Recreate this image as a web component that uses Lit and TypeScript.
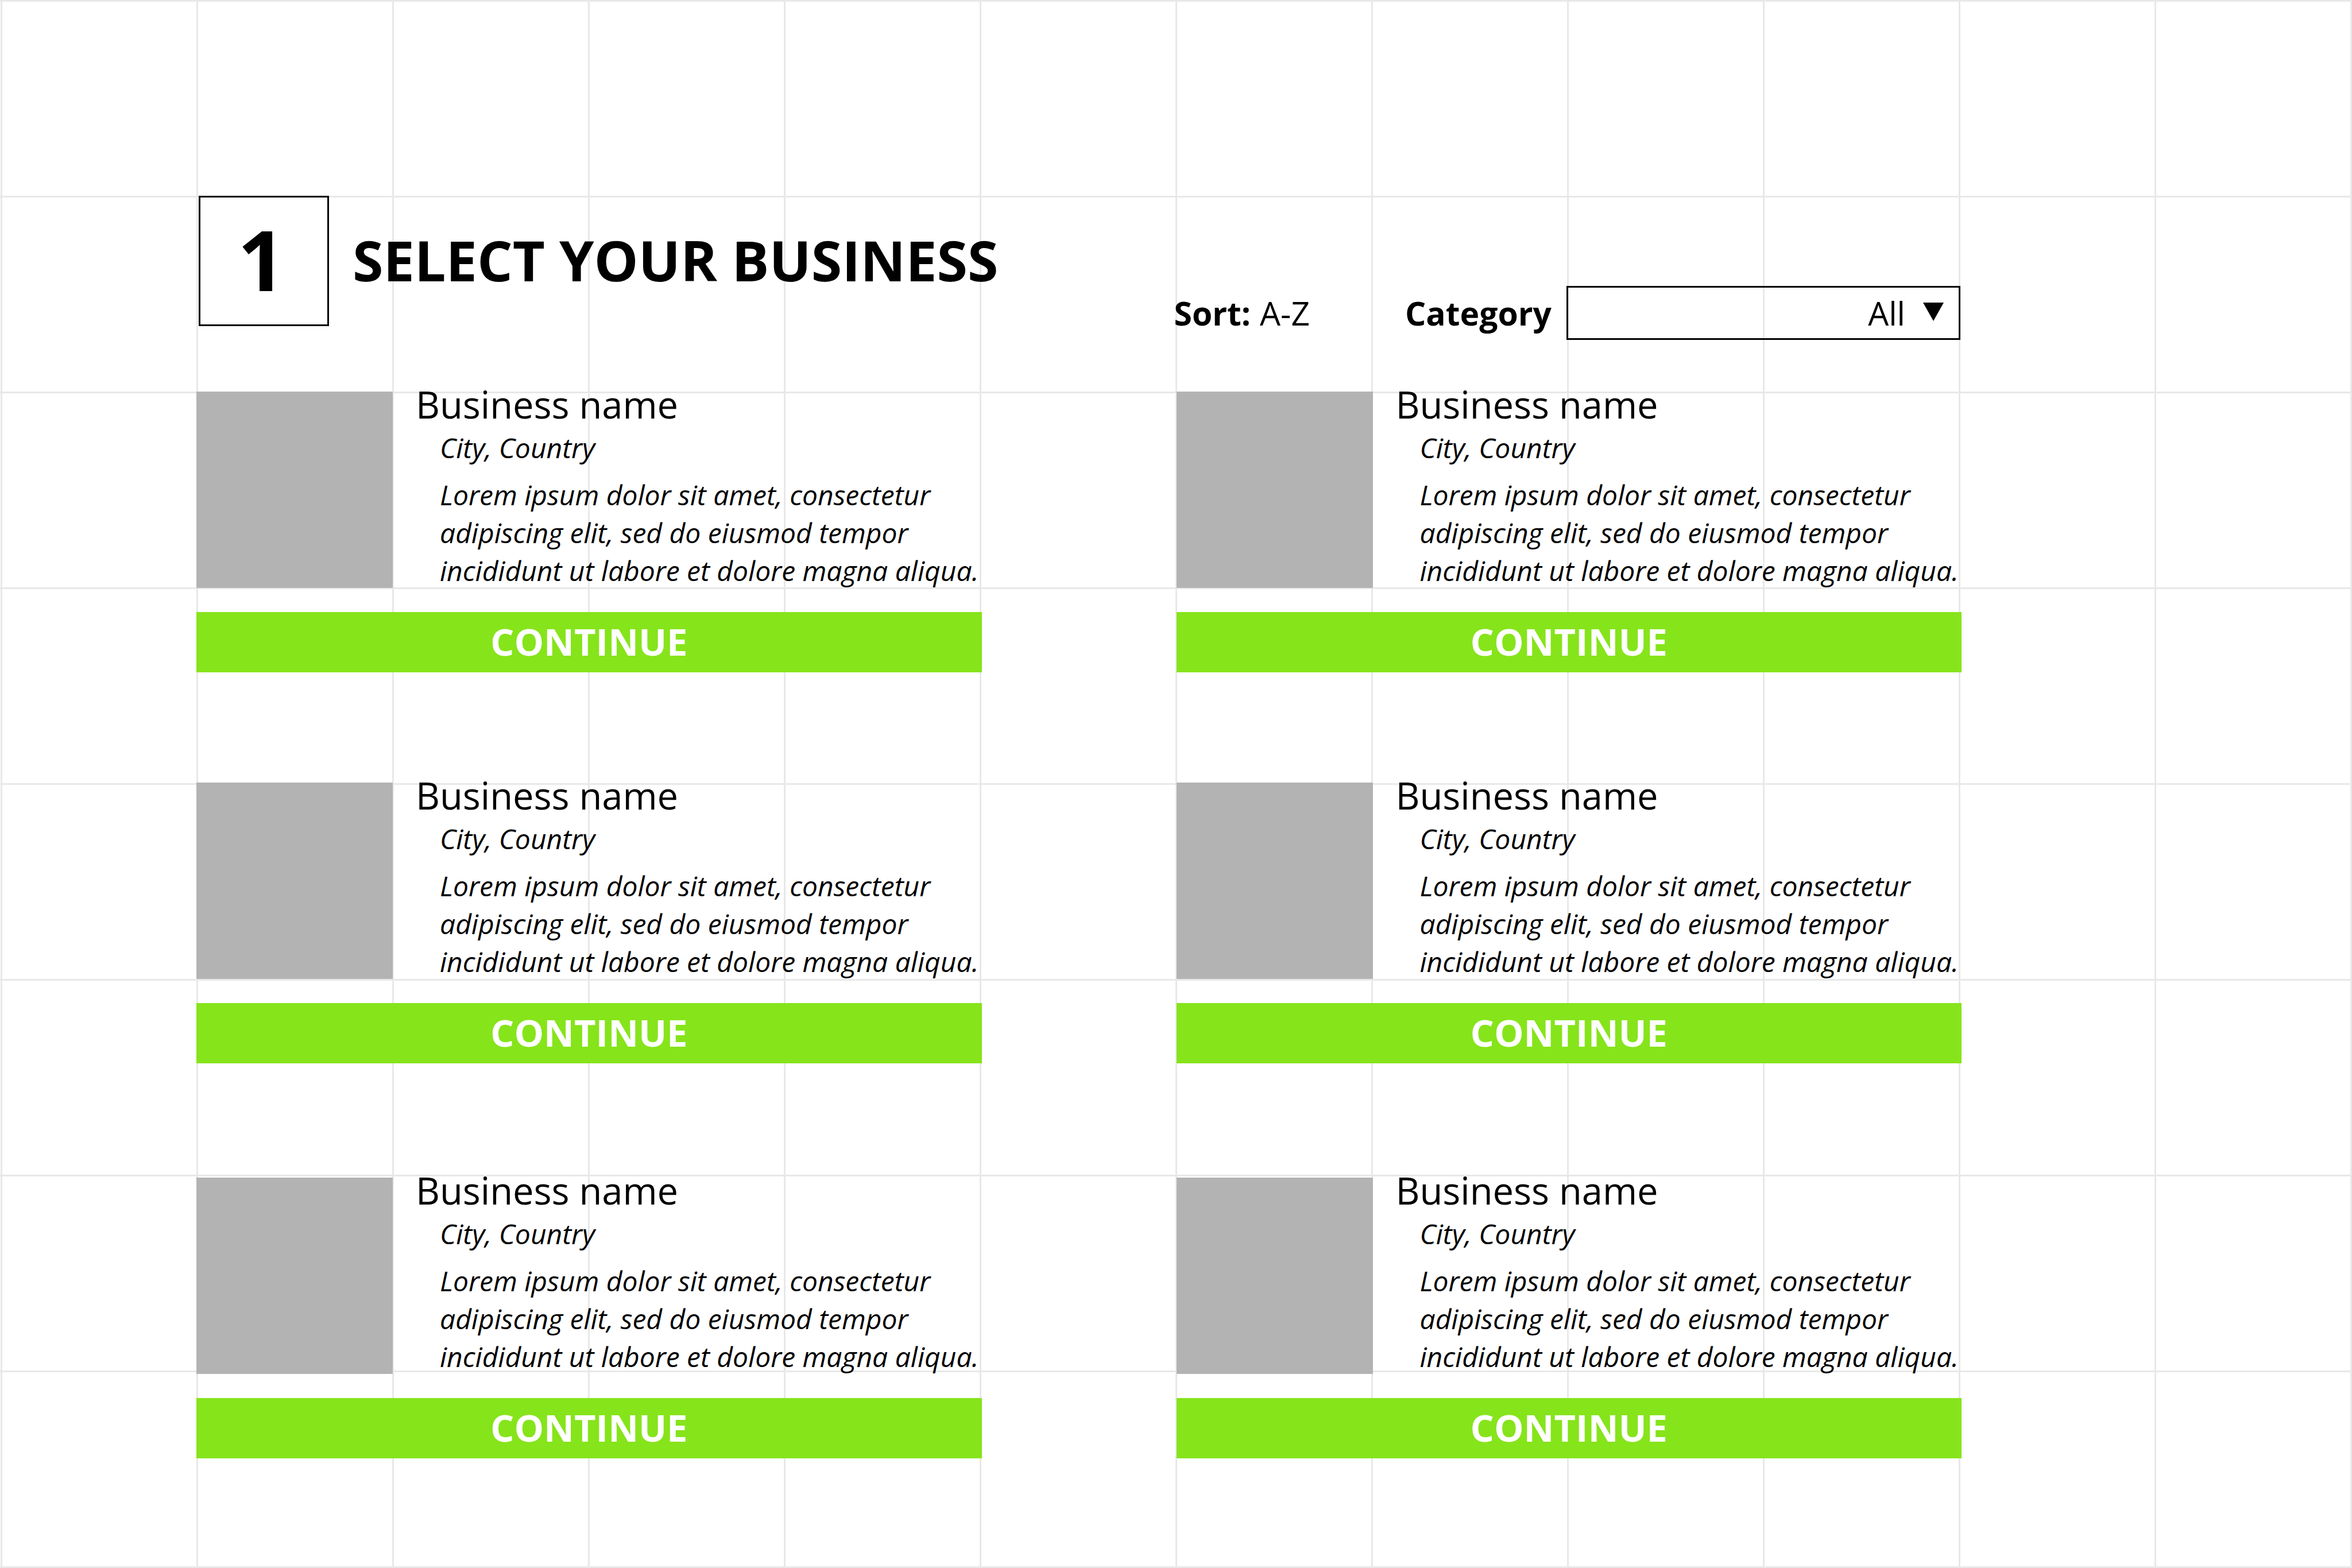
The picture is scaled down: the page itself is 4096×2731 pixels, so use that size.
import { LitElement, html, css } from "lit";
import { customElement, property } from "lit/decorators.js";

@customElement("business-card")
class BusinessCard extends LitElement {
  @property() name = "";
  @property() place = "";
  @property() text = "";

  static styles = css`
    :host {
      display: block;
    }
    .card {
      display: flex;
      flex-direction: column;
      gap: 42px;
    }
    .summary {
      display: flex;
      gap: 40px;
    }
    .thumb {
      flex: none;
      width: calc(var(--unit) + 1px);
      height: calc(var(--unit) + 1px);
      background: #b3b3b3;
    }
    .body {
      flex: 1;
      min-width: 0;
      margin: -21px 0 -4px;
    }
    .name {
      margin: 0;
      font-size: 65px;
      line-height: 86px;
      font-weight: 400;
    }
    .place,
    .text {
      margin: 0;
      padding-left: 42px;
      font-size: 48px;
      line-height: 66px;
      font-style: italic;
      white-space: pre-line;
    }
    .text {
      margin-top: 16px;
      margin-right: -8px;
    }
    .continue {
      box-sizing: border-box;
      width: 100%;
      height: 105px;
      padding: 0 0 3px;
      border: 0;
      background: #86e41b;
      color: #fff;
      font: 700 65px/102px "Open Sans", sans-serif;
      text-align: center;
    }
  `;

  render() {
    return html`
      <article class="card">
        <div class="summary">
          <div class="thumb"></div>
          <div class="body">
            <h2 class="name">${this.name}</h2>
            <p class="place">${this.place}</p>
            <p class="text">${this.text}</p>
          </div>
        </div>
        <button class="continue" type="button">CONTINUE</button>
      </article>
    `;
  }
}

const TEXT =
  "Lorem ipsum dolor sit amet, consectetur\nadipiscing elit, sed do eiusmod tempor\nincididunt ut labore et dolore magna aliqua.";

const BUSINESSES = Array.from({ length: 6 }, () => ({
  name: "Business name",
  place: "City, Country",
  text: TEXT,
}));

@customElement("app-root")
class AppRoot extends LitElement {
  static styles = css`
    :host {
      --unit: calc((100vw - 4px) / 12);
      display: block;
      box-sizing: border-box;
      min-height: 100vh;
      padding: var(--unit) calc(var(--unit) * 2 - 2px) 0
        calc(var(--unit) + 1px);
      color: #000;
      font-family: "Open Sans", sans-serif;
      background-color: #fff;
      background-image: linear-gradient(to right, #e8e8e8 3px, transparent 3px),
        linear-gradient(to bottom, #e8e8e8 3px, transparent 3px);
      background-size: var(--unit) var(--unit);
      background-position: 1px 0;
    }
    .top {
      display: grid;
      grid-template-columns: repeat(2, minmax(0, 1fr));
      column-gap: calc(var(--unit) - 2px);
      height: var(--unit);
    }
    .heading {
      display: flex;
      align-items: center;
      align-self: start;
      gap: 41px;
      padding-left: 4px;
    }
    .step {
      flex: none;
      box-sizing: border-box;
      width: 227px;
      height: 227px;
      padding-right: 8px;
      border: 3px solid #000;
      background: #fff;
      font-size: 146px;
      line-height: 214px;
      font-weight: 700;
      text-align: center;
    }
    .title {
      margin: 0;
      padding-bottom: 6px;
      font-size: 97px;
      line-height: 132px;
      font-weight: 700;
      white-space: nowrap;
    }
    .filters {
      display: flex;
      align-items: center;
      align-self: start;
      justify-content: space-between;
      margin-left: -4px;
      padding: 157px 2px 0 0;
      font-size: 57px;
      line-height: 78px;
    }
    .sort,
    .category {
      display: flex;
      align-items: center;
    }
    .sort {
      gap: 16px;
    }
    .category {
      gap: 26px;
    }
    .label {
      font-weight: 700;
    }
    .picker {
      display: grid;
      align-items: center;
      width: calc(var(--unit) * 2 + 4px);
    }
    .select {
      grid-area: 1 / 1;
      box-sizing: border-box;
      width: 100%;
      height: 94px;
      margin: 0;
      padding: 0 93px 0 20px;
      border: 3px solid #000;
      border-radius: 0;
      appearance: none;
      background: transparent;
      color: #000;
      font: inherit;
      text-align-last: right;
    }
    .arrow {
      grid-area: 1 / 1;
      justify-self: end;
      width: 36px;
      height: 32px;
      margin: 0 29px 4px 0;
      pointer-events: none;
    }
    .list {
      display: grid;
      grid-template-columns: repeat(2, minmax(0, 1fr));
      grid-template-rows: calc(var(--unit) * 2 - 1px) calc(var(--unit) * 2 + 6px) auto;
      column-gap: calc(var(--unit) - 2px);
    }
  `;

  render() {
    return html`
      <header class="top">
        <div class="heading">
          <div class="step">1</div>
          <h1 class="title">SELECT YOUR BUSINESS</h1>
        </div>
        <div class="filters">
          <div class="sort"><span class="label">Sort:</span><span>A-Z</span></div>
          <div class="category">
            <label class="label" for="category">Category</label>
            <div class="picker">
              <select class="select" id="category">
                <option>All</option>
              </select>
              <svg class="arrow" viewBox="0 0 36 32" aria-hidden="true">
                <path d="M0 0H36L18 32Z" />
              </svg>
            </div>
          </div>
        </div>
      </header>
      <main class="list">
        ${BUSINESSES.map(
          (b) => html`<business-card
            .name=${b.name}
            .place=${b.place}
            .text=${b.text}
          ></business-card>`
        )}
      </main>
    `;
  }
}
